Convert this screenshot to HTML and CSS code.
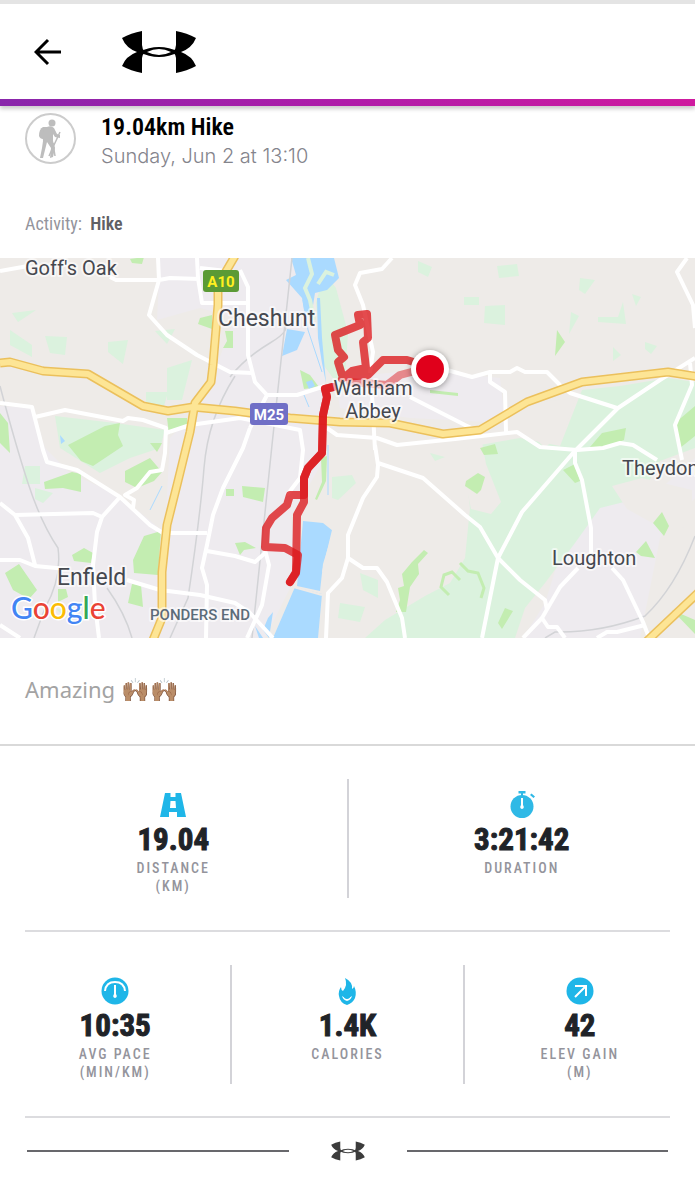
FILE: index.html
```
<!DOCTYPE html>
<html lang="en">
<head>
    <meta charset="UTF-8">
    <meta name="viewport" content="width=device-width, initial-scale=1.0">
    <title>19.04km Hike</title>
    <link rel="stylesheet" href="styles.css">
</head>
<body>

<header class="topbar">
    <button class="back" aria-label="Back">
        <svg width="28" height="28" viewBox="0 0 28 28"><path d="M14 2L2 14l12 12M2 14h25" fill="none" stroke="#000" stroke-width="3"/></svg>
    </button>
    <a href="#" class="brand" aria-label="Home">
        <svg width="76" height="44" viewBox="0 0 76 44">
            <defs>
                <g id="mark">
                    <path d="M21 1V15Q21 19 24 22Q21 25 21 28V43Q10 41 1 36Q5 26 16 22Q5 18 1 8Q10 3 21 1Z"/>
                    <path d="M55 1V15Q55 19 52 22Q55 25 55 28V43Q66 41 75 36Q71 26 60 22Q71 18 75 8Q66 3 55 1Z"/>
                    <path fill-rule="evenodd" d="M18 22Q28 17 38 17T58 22Q48 27 38 27T18 22ZM26 22Q32 25 38 25T50 22Q44 19 38 19T26 22Z"/>
                </g>
            </defs>
            <use href="#mark"/>
        </svg>
    </a>
</header>

<main>
    <section class="summary">
        <svg class="hiker" width="51" height="51" viewBox="0 0 51 51">
            <circle cx="25.500" cy="25.500" r="24.500" fill="none" stroke="#ccc" stroke-width="2"/>
            <g fill="#bdbdbd">
                <circle cx="27" cy="10" r="3.500"/>
                <path d="M18 14q-4 2-4 9q1 3 4 3l3-12z"/>
                <path d="M22 14q4-2 7 1l3 6 3 1v3l-5-1-2-3v7l2 7-2 9-3 1 1-10-4-6-2 8-2 8h-3l2-10 1-7q-1-8 1-14z"/>
            </g>
            <path d="M35 19L24 43M28 30l2 13" fill="none" stroke="#bdbdbd" stroke-width="1.500"/>
        </svg>
        <div>
            <h1>19.04km Hike</h1>
            <p class="date">Sunday, Jun 2 at 13:10</p>
        </div>
    </section>

    <p class="activity">Activity: <b>Hike</b></p>

    <svg class="map" viewBox="0 0 695 380" role="img" aria-label="Route map">
        <rect width="695" height="380" fill="#eeebe8"/>

        <!-- built-up areas -->
        <g fill="#eeebef">
            <path d="M0 148L32 150 45 190 70 215 120 238 165 275 170 180 200 150 235 60 200 50 157 62 160 0H300L325 110 325 200 290 260 300 310 265 380H0Z"/>
            <path d="M335 120L420 112 500 120 505 165 410 160 340 150Z"/>
            <path d="M570 265L600 245 650 240 695 200V240L660 280 650 330 640 380H523L545 345Z"/>
        </g>

        <!-- fields and forest -->
        <g fill="#dbf2de">
            <path d="M582 132L620 128 668 120 695 124V190L660 203 640 240 600 250 575 285 545 325 525 350 515 380H365L385 362 425 338 450 325 465 300 470 250 465 205 480 187 520 180 560 188Z"/>
            <path d="M55 158L115 165 165 172 160 190 130 200 100 215 60 190Z"/>
            <path d="M45 78l22 1-2 18-15-2zM108 84l20-2-5 24-15-12zM10 72l22 15v12l-22-12zM12 55l24-3-18 12z"/>
            <path d="M155 73l20-2-8 15zM167 110l25-8-10 40h-15zM146 134h22l-4 14-18-2z"/>
            <path d="M324 15l12 15 12 45-4 60-22-30-6-60zM418 3l14 6-4 10-10-5z"/>
            <path d="M497 8l20-2 2 12-20 2zM580 20l15 2-10 14-6-4zM485 48l20-1v20l-21-2zM464 39h15v8h-15zM571 54l8 4-10 18zM598 59h20l5-15 3 22-28-2zM632 36l9 3-5 9zM613 89l8 8-8 6zM645 84l12 4-6 8-6-5z"/>
            <path d="M332 219l20-2 4 8-18 17-6-2zM360 315l18 7v18l-15-8zM340 345l25 4-5 15-22-4zM430 195l15 4-10 4z"/>
            <path d="M25 208l15 0v18h-18zM35 230l18 5-10 10-8-4zM55 350l18 4-3 10z"/>
        </g>
        <path d="M470 182l12 2 4 22 15 38-10 12-20-5-8-40zM530 145l45 -5 -10 30-20 20-15-15zM612 228l30 -8 50 12v35l-25 6-40-22z" fill="#eeebe8"/>
        <g fill="#c3edb1">
            <path d="M105 168l15-3-2 12 5 11-30 20-12-5-13-16zM0 155l8 10 2 30-10-10zM44 224l28-10 9 2v18l-18-4-18 1zM125 213l25-13 12 14-8 9-17 7-12-6z"/>
            <path d="M72 297l12-7 9 5-2 10-17-2zM5 315l14-9 18 26-8 9-16-9zM58 331l8 0 2 8-10 5zM133 302l11-24 17-5-3 44-24-2zM132 326l9 1 2 22-15-4zM167 160h20v8l-18 8zM150 185l12 0-5 9z"/>
            <path d="M200 60l12-3v14l-14-5zM225 73l8 0v17h-10l4-7zM130 1l14-2-2 7-10-1zM242 228l23 2-2 14-20-5zM226 231h8v7h-8z"/>
            <path d="M300 112l10 5 9 12-15 2zM321 200l6-2-1 25-9 19-2-1 7-17zM430 132l28 3v3l-28-3zM235 285l10-1 11 6-12 2-4 5z"/>
            <path d="M557 72l8 12-10 14zM602 175l24-5-2 12-20 8-14-1zM480 190l15-4 3 10-14 1zM675 165l20-17v30l-15 12zM563 212l12-6 5 17-5 2zM466 223l12-8 7 4-4 13-4 4-12-8zM653 265l9-11 7 14-5 10zM636 294l10-11 9 17-14-2z"/>
            <path d="M424 292l4 3-10 11 1 10-9 13-4 25h-10l4-12-2-12 6-2-2-12 10-12zM672 352l23 10v14zM505 350l8 3-11 18-4-6z"/>
        </g>
        <path d="M460 305l8 8 10 2 6 15-3 10M460 322l-8-8-8 3-3 12 8 8" fill="none" stroke="#c3edb1" stroke-width="3"/>

        <!-- water -->
        <g fill="#aadaff">
            <path d="M291 0h43l5 20-12 12-12 3-4 25-7-8-2-12-16-18 10-5-2-7zM287 71l18 3-8 18-15 6z"/>
            <path d="M303 263l20 2 10 8-10 33-3 27-23-5zM295 329l27 7-4 44h-45z"/>
            <path d="M317 40l3 0 2 40 4 45-4-20-4-25zM60 177l5 6-4 3zM255 368l8 12h-4zM268 360l5-6-4 26-6-8zM306 124l6-2 3 6-6 3z"/>
        </g>
        <path d="M308 0l4 16-7 14 5 12 4 20M334 17l-8-3-8 12" fill="none" stroke="#dbf2de" stroke-width="4"/>
        <path d="M328 187v50M162 228l-12 24M303 42l5 30 14 42M304 137l5 12" fill="none" stroke="#aadaff"/>
        <path d="M290 328l32 9M333 272l-10 42" fill="none" stroke="#eeebe8" stroke-width="2"/>

        <!-- railways -->
        <g fill="none" stroke="#d2d3d6" stroke-width="1.500">
            <path d="M0 128Q15 185 28 225T58 290Q62 320 45 350L34 380"/>
            <path d="M292 0L272 187 252 380M230 119Q245 100 270 85T280 65M235 118Q208 160 204 210T188 340L170 380M107 330Q125 355 132 380"/>
            <path d="M695 278Q675 330 645 358 600 375 555 374L545 380"/>
        </g>

        <!-- local roads -->
        <g class="roads">
            <path d="M0 13L28 8M110 19L116 22H159L170 20 200 21M158 0L159 22 149 57 167 77 197 97 230 114 252 115M197 0L198 20 202 45H248M200 10L235 14"/>
            <path d="M0 145L32 149 43 192 47 204 77 212 120 239 150 267 163 275H207"/>
            <path d="M35 159L65 152 123 163 128 160 143 162 166 170 165 195 162 212 150 214 137 230 125 237 134 242 133 250"/>
            <path d="M166 175L190 167 240 160 300 172 303 192 300 220 287 237"/>
            <path d="M0 245L15 257 28 280 35 307M15 257L93 255 102 259M120 239L102 259 97 274 93 307 95 347 99 380M0 302H20L35 308 67 311M127 322L160 332 200 337 235 345 250 355 273 380M0 367L20 380"/>
            <path d="M250 170L243 190 223 230 213 257 207 287 202 310 207 327 206 380M207 293L235 298 255 304 265 295"/>
            <path d="M240 12L248 29V97L255 124 267 137H297L325 128M267 137L250 170"/>
            <path d="M265 292L269 307 262 347 247 380"/>
            <path d="M392 0L382 11 360 15 355 27 363 47 373 94 370 115"/>
            <path d="M430 105L447 112 472 119 490 114H510L517 110 525 114H547L560 127 570 135 617 150M490 114V124L505 134 506 174"/>
            <path d="M327 170L337 177 377 180 397 187 455 181 517 174 540 189 577 192 603 190 620 185 633 187 657 202M410 139L465 167 480 174M372 137L375 192"/>
            <path d="M695 100L660 122 618 150 573 195 522 254 498 300 482 380"/>
            <path d="M687 0L677 14 693 47 695 70M690 105L692 127 675 167 682 202"/>
            <path d="M575 194V205L582 222 591 270V295M578 310L560 329 542 360 523 380M542 360L548 369H557L565 380M612 310L623 322 643 364 648 377M597 380L607 374H617L645 367"/>
            <path d="M375 187L378 207 377 219 363 240 348 277V300L342 320 328 335 326 380M378 205L423 220 465 257 480 269 498 300 520 322 545 342 547 352M348 300L363 310H377L387 324 402 360 405 380"/>
        </g>

        <!-- motorways: casing first, fill on top -->
        <g class="casing">
            <path d="M235 -2L218 27V47L213 107 211 124 195 145 190 174 177 227 167 267 162 314V360L153 382"/>
            <path d="M0 105L10 104 43 113 88 116 143 148 168 153 193 149 235 153 290 160 340 164 390 165 443 176 480 172 527 144 582 124 668 114 700 119"/>
            <path d="M646 384L700 333"/>
        </g>
        <g class="fill">
            <path d="M235 -2L218 27V47L213 107 211 124 195 145 190 174 177 227 167 267 162 314V360L153 382"/>
            <path d="M0 105L10 104 43 113 88 116 143 148 168 153 193 149 235 153 290 160 340 164 390 165 443 176 480 172 527 144 582 124 668 114 700 119"/>
            <path d="M646 384L700 333"/>
        </g>

        <!-- recorded route -->
        <g class="route">
            <path d="M430 109L407 102H383L368 117 345 119M342 117L338 104 344 99 338 92 335 77 360 67 358 57 367 56 368 80 363 84 366 110 352 113 342 121"/>
            <path d="M430 109L400 117 387 127 350 124" opacity="0.6"/>
            <path d="M333 129L325 131 327 139 323 157 322 195 308 210 304 220V244L297 257 296 314 290 324"/>
            <path d="M333 129L325 131 327 139 323 157 322 195 308 210 304 220V237H290L287 247 272 260 266 270 265 289 285 290 298 297 296 315 290 324"/>
        </g>

        <!-- place names -->
        <g class="places">
            <text x="25" y="17" font-size="20">Goff's Oak</text>
            <text x="218" y="68" font-size="23">Cheshunt</text>
            <text x="373" y="137" font-size="20" text-anchor="middle">Waltham</text>
            <text x="373" y="160" font-size="20" text-anchor="middle">Abbey</text>
            <text x="622" y="217" font-size="20">Theydon Bois</text>
            <text x="552" y="307" font-size="20">Loughton</text>
            <text x="57" y="327" font-size="23">Enfield</text>
            <text x="150" y="362" font-size="15" class="district">PONDERS END</text>
        </g>
        <text class="google" x="11" y="361"><tspan fill="#4285f4">G</tspan><tspan fill="#ea4335">o</tspan><tspan fill="#fbbc05">o</tspan><tspan fill="#4285f4">g</tspan><tspan fill="#34a853">l</tspan><tspan fill="#ea4335">e</tspan></text>

        <g class="shield">
            <rect x="203" y="12" width="36" height="22" rx="3" fill="#5b9a35"/>
            <text x="221" y="29" fill="#fff01f">A10</text>
            <rect x="250" y="145" width="38" height="22" rx="3" fill="#706fc6"/>
            <text x="269" y="162" fill="#fff">M25</text>
        </g>

        <circle class="pin" cx="430" cy="111" r="19" fill="#fff"/>
        <circle cx="430" cy="111" r="14" fill="#e0001b"/>
    </svg>

    <p class="note">Amazing <span class="emoji">🙌🏽🙌🏽</span></p>

    <section class="stats">
        <div class="row">
            <div class="stat">
                <svg width="28" height="28" viewBox="0 0 28 28"><path fill="#1fb6e8" fill-rule="evenodd" d="M6 2h5.500v4h5V2H22l5 24h-9v-5h-8v5H1zM11.500 10L11 17h6l-.5-7z"/></svg>
                <strong>19.04</strong>
                <span>Distance<br>(km)</span>
            </div>
            <div class="stat">
                <svg width="28" height="28" viewBox="0 0 28 28">
                    <g fill="#2fb9e6"><circle cx="14" cy="15.500" r="11.500"/><path d="M10.500 0h7v2.500H15V5h-2V2.500h-2.500zM22 4l1.500-1.500 3.500 3L25.500 7z"/></g>
                    <path d="M13 7h2v7q2 3-1 4q-3-1-1-4z" fill="#fff"/>
                </svg>
                <strong>3:21:42</strong>
                <span>Duration</span>
            </div>
        </div>
        <div class="row">
            <div class="stat">
                <svg width="28" height="28" viewBox="0 0 28 28">
                    <circle cx="14" cy="14" r="13.500" fill="#1fb6e8"/>
                    <path d="M4 14q1-9 10-9t10 9" fill="none" stroke="#fff" stroke-width="2"/>
                    <path d="M13 8h2v9q2 3-1 4q-3-1-1-4z" fill="#fff"/>
                </svg>
                <strong>10:35</strong>
                <span>Avg Pace<br>(min/km)</span>
            </div>
            <div class="stat">
                <svg width="28" height="28" viewBox="0 0 28 28">
                    <path d="M12 1q8 4 7 11q2-1 2-3q3 6 1 12q-2 5-8 7q-7-2-8-9q-1-5 2-9q0 3 2 4q5-6 2-13z" fill="#1fb6e8"/>
                    <path d="M9 19q5 4 10 0q-1 4-5 5q-4-1-5-5z" fill="#fff"/>
                    <path d="M10 18q4 4 8 0q-1 4-4 4t-4-4z" fill="#1fb6e8"/>
                </svg>
                <strong>1.4K</strong>
                <span>Calories</span>
            </div>
            <div class="stat">
                <svg width="28" height="28" viewBox="0 0 28 28">
                    <circle cx="14" cy="14" r="13.500" fill="#1fb6e8"/>
                    <path d="M9 9h11v10M20 9L9 20" fill="none" stroke="#fff" stroke-width="2"/>
                </svg>
                <strong>42</strong>
                <span>Elev Gain<br>(m)</span>
            </div>
        </div>
    </section>
</main>

<footer>
    <svg width="36" height="20" viewBox="0 0 76 44" fill="#3c3c3c"><use href="#mark"/></svg>
</footer>

</body>
</html>
```
FILE: styles.css
```
body {
    margin: 0;
    background: #fff;
    border-top: 4px solid #e4e4e4;
    font-family: 'Roboto Condensed', 'Liberation Sans', sans-serif;
}
p, h1 { margin: 0; }
.topbar {
    display: flex;
    align-items: center;
    gap: 59px;
    height: 95px;
    padding-left: 34px;
    border-bottom: 7px solid;
    border-image: linear-gradient(to right, #8926ab, #b01ca9 50%, #cf1b9f) 1;
    box-shadow: 0 3px 4px rgba(0,0,0,0.2);
}
.back {
    padding: 0;
    border: none;
    background: none;
    cursor: pointer;
}
.back svg, .brand svg, .map, footer svg { display: block; }
.summary {
    display: flex;
    gap: 25px;
    padding: 7px 25px 0;
}
h1 {
    font-size: 24px;
    line-height: 29px;
    font-weight: 600;
    color: #000;
}
.date {
    font-family: Inter, sans-serif;
    font-size: 20px;
    line-height: 28px;
    font-weight: 300;
    color: #84848c;
}
.activity {
    padding: 42px 25px 22px;
    font-size: 18px;
    line-height: 24px;
    color: #94949c;
}
.activity b {
    margin-left: 4px;
    font-weight: 600;
    color: #606064;
}
.map {
    width: 100%;
    height: auto;
    font-family: Roboto, sans-serif;
}
.roads {
    fill: none;
    stroke: #fff;
    stroke-width: 4;
    stroke-linejoin: round;
}
.casing, .fill {
    fill: none;
    stroke-linejoin: round;
}
.casing { stroke: #ebc05c; stroke-width: 9; }
.fill { stroke: #fde595; stroke-width: 6; }
.route {
    fill: none;
    stroke: rgba(221,24,28,0.78);
    stroke-width: 8;
    stroke-linecap: round;
    stroke-linejoin: round;
}
.places {
    fill: #45484f;
    stroke: rgba(255,255,255,0.6);
    stroke-width: 4;
    stroke-linejoin: round;
    paint-order: stroke;
}
.district {
    font-weight: 500;
    fill: #5c6b79;
}
.google {
    font-family: Lato, sans-serif;
    font-size: 30px;
    font-weight: 500;
    stroke: #fff;
    stroke-width: 3;
    paint-order: stroke;
}
.shield {
    font-size: 15px;
    font-weight: 700;
    text-anchor: middle;
}
.pin { filter: drop-shadow(0 1px 3px rgba(0,0,0,0.4)); }
.note {
    padding: 35px 25px 39px;
    font-family: 'Noto Sans', sans-serif;
    font-size: 22px;
    line-height: 32px;
    color: #a3a3a3;
    border-bottom: 2px solid #d9d9d9;
}
.emoji {
    font-size: 23px;
    line-height: 1;
}
.row {
    position: relative;
    display: flex;
    padding: 33px 0 34px;
}
.row::after {
    content: "";
    position: absolute;
    left: 25px;
    right: 25px;
    bottom: 0;
    height: 2px;
    background: #dcdcdf;
}
.stat {
    flex: 1;
    display: flex;
    flex-direction: column;
    align-items: center;
    height: 119px;
    padding-top: 12px;
    box-sizing: border-box;
}
.stat + .stat { border-left: 2px solid #d3d3d8; }
.stat strong {
    font-size: 31px;
    line-height: 42px;
    margin-bottom: -2px;
    color: #202328;
    -webkit-text-stroke: 1px #202328;
}
.stat span {
    font-size: 14px;
    line-height: 18px;
    font-weight: 500;
    letter-spacing: 2px;
    text-align: center;
    text-transform: uppercase;
    color: #94949c;
}
footer {
    display: flex;
    align-items: center;
    gap: 41px;
    padding: 23px 27px 38px;
}
footer::before, footer::after {
    content: "";
    flex: 1;
    height: 2px;
    background: #68686c;
}
```
